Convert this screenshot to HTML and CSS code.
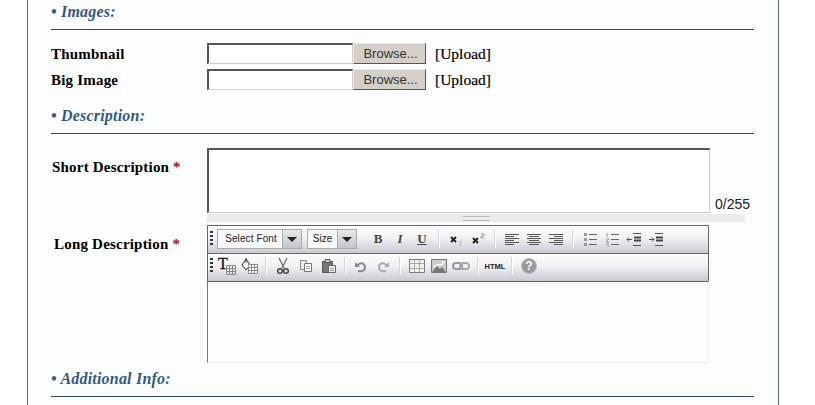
FILE: index.html
```html
<!DOCTYPE html>
<html lang="en">
<head>
  <meta charset="UTF-8" />
  <title>Edit Product</title>
  <link rel="stylesheet" href="styles.css">
</head>
<body>
  <div class="panel">
    <h3 class="section first">• Images:</h3>
    <div class="row upload-row first-upload">
      <label class="label">Thumbnail</label>
      <input type="text" class="file-text">
      <button class="browse">Browse...</button>
      <a class="upload">[Upload]</a>
    </div>
    <div class="row upload-row">
      <label class="label">Big Image</label>
      <input type="text" class="file-text">
      <button class="browse">Browse...</button>
      <a class="upload">[Upload]</a>
    </div>

    <h3 class="section second">• Description:</h3>
    <div class="row short-row">
      <label class="label short-label">Short Description <span class="req">*</span></label>
      <div class="short-field">
        <div class="short-top">
          <textarea class="short-text"></textarea>
          <span class="counter">0/255</span>
        </div>
        <div class="resizer"><span class="resizer-grip"></span></div>
      </div>
    </div>

    <div class="row long-row">
      <label class="label long-label">Long Description <span class="req">*</span></label>
      <div class="editor">
        <div class="toolbar top-bar">
          <span class="grip"></span>
          <div class="combo font-combo"><span class="combo-text">Select Font</span><span class="combo-arrow"></span></div>
          <div class="combo size-combo"><span class="combo-text">Size</span><span class="combo-arrow"></span></div>
          <div class="group bold-group">
            <span class="btn txt b">B</span>
            <span class="btn txt i">I</span>
            <span class="btn txt u">U</span>
          </div>
          <span class="sep"></span>
          <span class="btn"><svg width="16" height="16"><path d="M3 6l5 5M8 6l-5 5" stroke="#222" stroke-width="2"/><path d="M11 11h3M11 14h3" stroke="#aaa"/></svg></span>
          <span class="btn"><svg width="16" height="16"><path d="M3 7l5 5M8 7l-5 5" stroke="#222" stroke-width="2"/><path d="M11 3h3v2h-3v2h3" fill="none" stroke="#999"/></svg></span>
          <span class="sep"></span>
          <span class="btn"><svg width="16" height="16"><path d="M1 3.500h14M1 5.500h9M1 7.500h14M1 9.500h9M1 11.500h14M1 13.500h9" stroke="#555"/></svg></span>
          <span class="btn"><svg width="16" height="16"><path d="M1 3.500h14M3 5.500h10M1 7.500h14M3 9.500h10M1 11.500h14M3 13.500h10" stroke="#555"/></svg></span>
          <span class="btn"><svg width="16" height="16"><path d="M1 3.500h14M6 5.500h9M1 7.500h14M6 9.500h9M1 11.500h14M6 13.500h9" stroke="#555"/></svg></span>
          <span class="sep"></span>
          <span class="btn"><svg width="16" height="16"><path d="M2 2h3v3H2zM2 7h3v3H2zM2 12h3v3H2z" fill="#999"/><path d="M7 3.500h8M7 8.500h8M7 13.500h8" stroke="#666"/></svg></span>
          <span class="btn"><svg width="16" height="16"><path d="M3 2v4M2 8h3l-3 3h3M2 13h3M3 15h2" stroke="#999" fill="none"/><path d="M7 3.500h8M7 8.500h8M7 13.500h8" stroke="#666"/></svg></span>
          <span class="btn"><svg width="16" height="16"><path d="M7 2.500h8M7 14.500h8" stroke="#555"/><path d="M8 6.500h7M8 9.500h7" stroke="#444" stroke-width="2"/><path d="M6 8.500H1M3 6.500l-2 2 2 2" fill="none" stroke="#555"/></svg></span>
          <span class="btn"><svg width="16" height="16"><path d="M7 2.500h8M7 14.500h8" stroke="#555"/><path d="M8 6.500h7M8 9.500h7" stroke="#444" stroke-width="2"/><path d="M1 8.500h5M4 6.500l2 2-2 2" fill="none" stroke="#555"/></svg></span>
        </div>
        <div class="toolbar bottom-bar">
          <span class="grip"></span>
          <span class="btn first-btn"><span class="tt">T</span><svg class="mini" width="10" height="10"><path d="M.5.500h9v9h-9zM.5 3.500h9M.5 6.500h9M3.500.5v9M6.500.5v9" fill="none" stroke="#888"/></svg></span>
          <span class="btn"><svg width="18" height="18"><path d="M6 2l-4 6 4 5 4-5z" fill="#fff" stroke="#333"/><path d="M6 1v5" stroke="#333"/><path d="M8.500 7.500h9v9h-9zM8.500 10.500h9M8.500 13.500h9M11.500 7.500v9M14.500 7.500v9" fill="#fff" stroke="#888"/></svg></span>
          <span class="sep"></span>
          <span class="btn"><svg width="16" height="18"><path d="M4 1l5 10M12 1L7 11" stroke="#777" stroke-width="1.500"/><circle cx="5" cy="14" r="2.300" fill="none" stroke="#444" stroke-width="1.500"/><circle cx="11" cy="14" r="2.300" fill="none" stroke="#444" stroke-width="1.500"/></svg></span>
          <span class="btn copy-btn"><svg width="16" height="16"><path d="M2.500 2.500h6v9h-6z" fill="#eee" stroke="#888"/><path d="M6.500 5.500h7v8h-7z" fill="#fff" stroke="#777"/><path d="M8 8.500h4M8 10.500h4" stroke="#aaa"/></svg></span>
          <span class="btn paste-btn"><svg width="16" height="16"><path d="M1.500 3.500h10v11h-10z" fill="#777" stroke="#555"/><path d="M4 1.500h5v3H4z" fill="#ccc" stroke="#555"/><path d="M7.500 7.500h7v7h-7z" fill="#eee" stroke="#666"/><path d="M9 10.500h4M9 12.500h4" stroke="#999"/></svg></span>
          <span class="sep"></span>
          <span class="btn"><svg width="16" height="16"><path d="M5 13c5 1 7-1 7-4s-3-5-6-3L3 8" fill="none" stroke="#888" stroke-width="2"/><path d="M2 4v5h5z" fill="#888"/></svg></span>
          <span class="btn"><svg width="16" height="16"><path d="M11 13c-5 1-7-1-7-4s3-5 6-3l3 2" fill="none" stroke="#aaa" stroke-width="2"/><path d="M14 4v5H9z" fill="#aaa"/></svg></span>
          <span class="sep"></span>
          <span class="btn"><svg width="16" height="16"><path d="M.5 1.500h15v13H.5z" fill="#f4f1e8" stroke="#777"/><path d="M.5 5.500h15M.5 10.500h15M5.500 1.500v13M10.500 1.500v13" stroke="#aaa"/></svg></span>
          <span class="btn"><svg width="16" height="16"><path d="M.5 1.500h15v13H.5z" fill="#c8ccd0" stroke="#777"/><path d="M1 14l5-6 3 3 2-2 4 5z" fill="#777"/><path d="M3 9c3-4 6-1 9-3" fill="none" stroke="#fff" stroke-width="1.500"/><circle cx="12" cy="4.500" r="1.500" fill="#eee"/></svg></span>
          <span class="btn"><svg width="18" height="16"><rect x="1" y="5" width="9" height="6" rx="3" fill="none" stroke="#999" stroke-width="2"/><rect x="8" y="5" width="9" height="6" rx="3" fill="none" stroke="#aaa" stroke-width="2"/></svg></span>
          <span class="sep"></span>
          <span class="btn html">HTML</span>
          <span class="sep"></span>
          <span class="btn"><svg width="18" height="18"><circle cx="9" cy="9" r="7.500" fill="#999" stroke="#bbb"/><text x="9" y="13" class="help-mark">?</text></svg></span>
        </div>
        <div class="edit-area"></div>
      </div>
    </div>

    <h3 class="section third">• Additional Info:</h3>
  </div>
</body>
</html>
```

FILE: styles.css
```css
html, body {
  margin: 0;
  padding: 0;
  height: 405px;
  overflow: hidden;
  background: #fff;
}
body {
  font-family: "Liberation Serif", serif;
  font-size: 15px;
  color: #000;
}
.panel {
  box-sizing: border-box;
  width: 752px;
  height: 405px;
  margin-left: 27px;
  padding: 0 24px 0 23px;
  background: #fbfdff;
  border-left: 1px solid #4a6a8a;
  border-right: 1px solid #4a6a8a;
  overflow: hidden;
}
.section {
  margin: 0;
  height: 18px;
  line-height: 18px;
  font-size: 16px;
  font-style: italic;
  font-weight: bold;
  letter-spacing: 0.2px;
  color: #34597f;
  border-bottom: 1px solid #2f4a66;
}
.section.first {
  padding: 3px 0 8px;
}
.section.second {
  margin-top: 17px;
  padding: 0 0 8px;
}
.section.third {
  margin-top: 7px;
  padding: 0 0 8px;
}
.row {
  display: flex;
}
.upload-row {
  height: 21px;
  margin-top: 5px;
  align-items: center;
}
.first-upload {
  margin-top: 13px;
}
.label {
  width: 156px;
  font-weight: bold;
  letter-spacing: 0.2px;
  flex-shrink: 0;
}
.upload-row .label {
  padding-top: 2px;
}
.file-text {
  box-sizing: border-box;
  width: 146px;
  height: 21px;
  margin: 0;
  padding: 0;
  background: #fff;
  border-style: solid;
  border-color: #555 #d4d0c8 #d4d0c8 #555;
  border-width: 2px 1px 1px 2px;
}
.browse {
  box-sizing: border-box;
  width: 73px;
  height: 21px;
  margin: 0;
  padding: 0 0 0 2px;
  font-family: "Liberation Sans", sans-serif;
  font-size: 13px;
  color: #333;
  background: #d4d0c8;
  border: 1px solid;
  border-color: #ece9e2 #555 #555 #ece9e2;
}
.upload {
  margin-left: 9px;
  padding-top: 1px;
  font-size: 15.500px;
  -webkit-text-stroke: 0.2px #000;
}
.short-row {
  margin-top: 14px;
}
.short-label {
  padding: 11px 0 0 1px;
  width: 155px;
}
.req {
  color: #a0152a;
}
.short-field {
  width: 538px;
}
.short-top {
  display: flex;
  align-items: flex-end;
}
.short-text {
  box-sizing: border-box;
  display: block;
  flex-shrink: 0;
  width: 503px;
  height: 65px;
  margin: 0;
  padding: 0;
  resize: none;
  background: #fff;
  border-style: solid;
  border-width: 2px 1px 1px 2px;
  border-color: #555 #ccc #ccc #555;
}
.counter {
  margin: 0 0 1px 5px;
  font-family: "Liberation Sans", sans-serif;
  font-size: 14px;
  line-height: 16px;
  color: #222;
}
.resizer {
  height: 8px;
  margin-top: 1px;
  background: #ebebeb;
  display: flex;
  align-items: center;
  justify-content: center;
}
.resizer-grip {
  width: 27px;
  height: 3px;
  border-top: 1px solid #bbb;
  border-bottom: 1px solid #bbb;
}
.long-row {
  margin-top: 3px;
}
.long-label {
  width: 153px;
  padding: 11px 0 0 3px;
}
.editor {
  box-sizing: border-box;
  width: 502px;
  height: 138px;
}
.toolbar {
  box-sizing: border-box;
  height: 28px;
  display: flex;
  align-items: center;
  background: linear-gradient(#fdfdfe, #f1f1f4 45%, #c9c9d1);
  border: 1px solid #666;
  border-bottom: 0;
}
.top-bar {
  padding-bottom: 2px;
}
.bottom-bar {
  padding-bottom: 3px;
}
.grip {
  width: 3px;
  height: 16px;
  margin: 0 1px 0 2px;
  flex-shrink: 0;
  background: repeating-linear-gradient(#333 0 2px, transparent 2px 4px);
}
.combo {
  box-sizing: border-box;
  height: 20px;
  display: flex;
  align-items: stretch;
  border: 1px solid #aaa;
  background: #f6f6f8;
  font-family: "Liberation Sans", sans-serif;
  font-size: 10px;
}
.font-combo {
  width: 85px;
  margin-left: 3px;
}
.font-combo .combo-text {
  padding-left: 2px;
  letter-spacing: 0.1px;
}
.size-combo {
  width: 50px;
  margin-left: 5px;
}
.combo-text {
  flex: 1;
  line-height: 18px;
  text-align: center;
  color: #222;
  background: #f8f8fa;
}
.combo-arrow {
  width: 18px;
  background: linear-gradient(#e8e8ec, #c4c4cc);
  border-left: 1px solid #aaa;
  position: relative;
}
.combo-arrow::after {
  content: "";
  position: absolute;
  left: 4px;
  top: 7px;
  border-left: 5px solid transparent;
  border-right: 5px solid transparent;
  border-top: 5px solid #222;
}
.btn {
  width: 22px;
  height: 20px;
  flex-shrink: 0;
  display: flex;
  align-items: center;
  justify-content: center;
  position: relative;
}
.txt {
  font-size: 13px;
  font-weight: bold;
  color: #444;
}
.bold-group {
  display: flex;
  margin-left: 10px;
}
.i {
  font-style: italic;
}
.u {
  text-decoration: underline;
}
.sep {
  width: 1px;
  height: 18px;
  flex-shrink: 0;
  margin: 0 5px;
  background: #d6d6da;
  border-right: 1px solid #fff;
}
.first-btn {
  margin-left: 2px;
}
.copy-btn, .paste-btn {
  margin-left: 1px;
}
.paste-btn + .sep {
  margin-left: 4px;
  margin-right: 4px;
}
.tt {
  font-size: 16px;
  color: #111;
  margin: -4px 8px 0 0;
  -webkit-text-stroke: 0.3px #111;
}
.mini {
  position: absolute;
  right: 2px;
  bottom: 1px;
}
.html {
  font-family: "Liberation Sans", sans-serif;
  font-size: 7.500px;
  font-weight: bold;
  color: #222;
}
.help-mark {
  font-family: "Liberation Sans", sans-serif;
  font-size: 12px;
  font-weight: bold;
  fill: #fff;
  text-anchor: middle;
}
.edit-area {
  box-sizing: border-box;
  height: 82px;
  background: #fbfdff;
  border-top: 1px solid #666;
  border-left: 1px solid #777;
  border-right: 1px solid #eee;
  border-bottom: 1px solid #eee;
}
```
